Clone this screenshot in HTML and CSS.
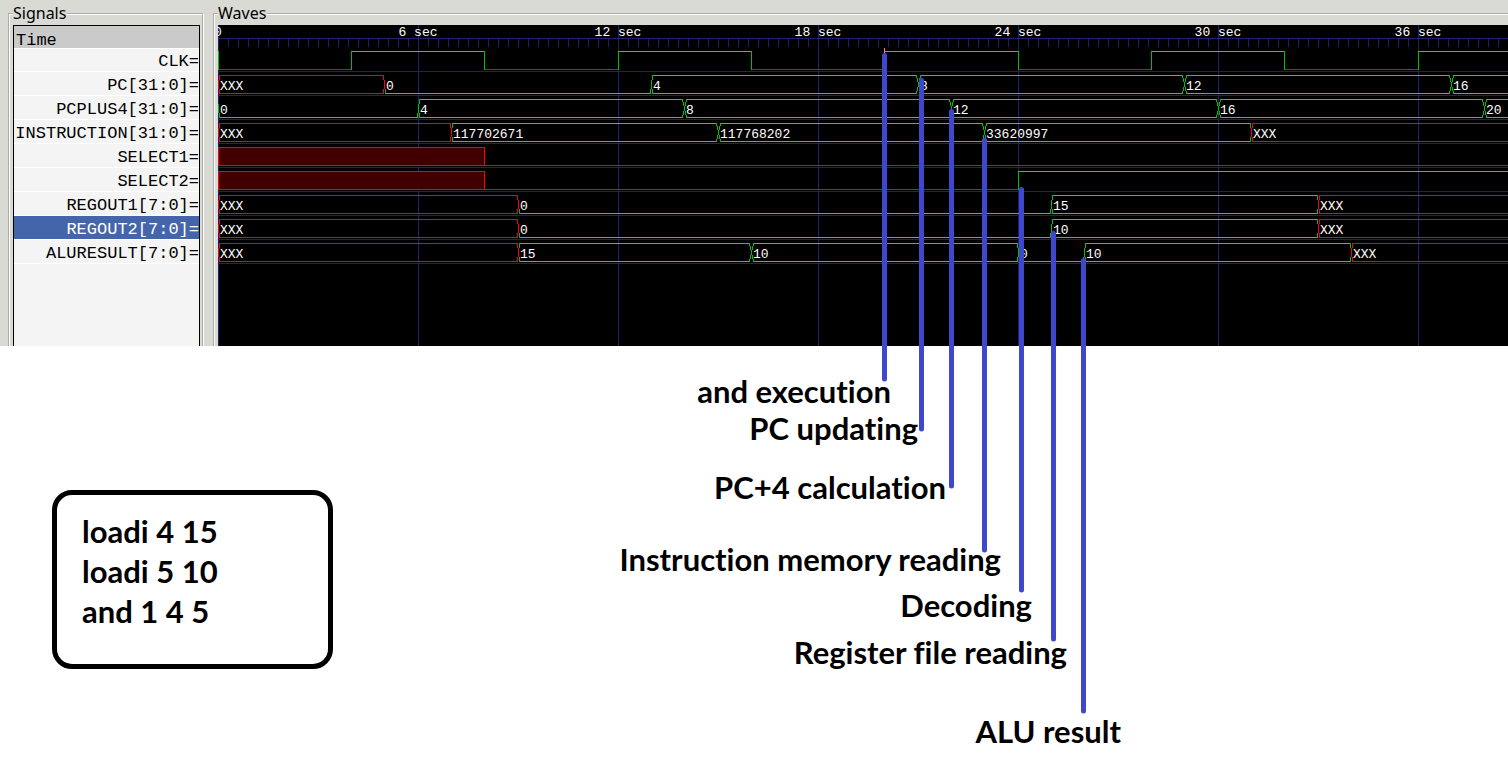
FILE: index.html
```html
<!DOCTYPE html>
<html lang="en">
<head>
<meta charset="utf-8">
<title>Waveform viewer</title>
<link rel="stylesheet" href="styles.css">
</head>
<body>
<main class="page">
  <div class="viewer">
    <fieldset class="group signals">
      <legend>Signals</legend>
      <div class="signal-box">
        <div class="time">Time</div>
        <ul class="signal-list">
          <li><span>CLK</span><span>=</span></li>
          <li><span>PC[31:0]</span><span>=</span></li>
          <li><span>PCPLUS4[31:0]</span><span>=</span></li>
          <li><span>INSTRUCTION[31:0]</span><span>=</span></li>
          <li><span>SELECT1</span><span>=</span></li>
          <li><span>SELECT2</span><span>=</span></li>
          <li><span>REGOUT1[7:0]</span><span>=</span></li>
          <li class="selected"><span>REGOUT2[7:0]</span><span>=</span></li>
          <li><span>ALURESULT[7:0]</span><span>=</span></li>
        </ul>
      </div>
    </fieldset>
    <fieldset class="group waves">
      <legend>Waves</legend>
      <svg class="chart" id="chart" role="img" aria-label="Signal waveforms"></svg>
    </fieldset>
  </div>

  <div class="program">
    <div>loadi 4 15</div>
    <div>loadi 5 10</div>
    <div>and 1 4 5</div>
  </div>

  <svg class="notes">
    <path class="pointer" d="M884.5 55.500V379M921.500 80.500V429M951.500 111.500V486M984.500 140.500V550M1021.500 189.500V590M1053.500 233.500V639M1083.500 260.500V711"/>
    <text x="891" y="403">and execution</text>
    <text x="918" y="440">PC updating</text>
    <text x="946" y="499">PC+4 calculation</text>
    <text x="1001" y="571">Instruction memory reading</text>
    <text x="1032" y="617">Decoding</text>
    <text x="1067" y="664">Register file reading</text>
    <text x="1121" y="743">ALU result</text>
  </svg>
</main>
<script src="waves.js"></script>
</body>
</html>
```

FILE: styles.css
```css
* { box-sizing: border-box; }

body {
  margin: 0;
  background: #fff;
  color: #000;
  font-family: "Noto Sans", sans-serif;
}

.page { position: relative; overflow: hidden; min-height: 100vh; }

.viewer {
  display: flex;
  gap: 10px;
  padding: 3px 0 0 8px;
  background: #dadad5;
}

.group {
  min-width: 0;
  margin: 0;
  padding: 0 2px 0 3px;
  border: 2px groove #fff;
  border-bottom: 0;
}

.group legend {
  height: 22px;
  padding: 0 1px 0 0;
  font-size: 16px;
  line-height: 20px;
}

.signals { flex: none; width: 196px; }

.waves { flex: 1; margin-left: -1px; padding-right: 0; border-right: 0; }

.signal-box {
  height: 321px;
  border: 1px solid #000;
  border-bottom: 0;
  background: #f4f4f4;
  font-family: "Liberation Mono", monospace;
  font-size: 17px;
}

.time {
  height: 22px;
  padding-left: 2px;
  background: #cacaca;
  line-height: 30px;
}

.signal-list { margin: 0; padding: 0; list-style: none; }

.signal-list li {
  display: flex;
  justify-content: flex-end;
  height: 24px;
  border-bottom: 1px solid #fff;
  line-height: 28px;
  white-space: nowrap;
}

.signal-list li:first-child { border-top: 1px solid #fff; line-height: 26px; }

.signal-list .selected { background: #4565ab; color: #fff; }

.chart {
  display: block;
  width: 100%;
  height: 321px;
  background: #000;
  overflow: hidden;
}

.chart path { fill: none; stroke-width: 1px; shape-rendering: crispEdges; }
.chart .grid { stroke: #202070; }
.chart .value { stroke: #00f000; }
.chart .edge { stroke: #00c000; }
.chart .low { stroke: #008000; }
.chart .unknown { stroke: #f00; }
.chart .marker { stroke: #ff8080; }
.chart .block { fill: #400000; stroke: #f00; }

.chart text {
  fill: #fff;
  font-family: "Liberation Mono", monospace;
  font-size: 13px;
}

.chart .tick { text-anchor: middle; }

.program {
  width: 281px;
  margin: 144px 0 0 52px;
  padding: 16px 25px 33px;
  border: 5px solid #000;
  border-radius: 20px;
  font-family: Lato, sans-serif;
  font-size: 31px;
  font-weight: 700;
  line-height: 40px;
}

.notes {
  position: absolute;
  top: 0;
  left: 0;
  width: 100%;
  height: 100%;
  pointer-events: none;
}

.notes text {
  font-family: Lato, sans-serif;
  font-size: 31px;
  font-weight: 700;
  font-variant-ligatures: none;
  text-anchor: end;
}

.pointer { fill: none; stroke: #3f48cc; stroke-width: 5px; stroke-linecap: round; }
```

FILE: waves.js
```js
const chart = document.getElementById("chart");
const END = chart.clientWidth || chart.getBoundingClientRect().width;
const ROW = 24;
const at = (seconds) => Math.floor((seconds * 100) / 3 + 0.01);

function add(name, attrs, text) {
  const node = document.createElementNS("http://www.w3.org/2000/svg", name);
  for (const key in attrs) node.setAttribute(key, attrs[key]);
  if (text !== undefined) node.textContent = text;
  chart.append(node);
}

function across(cls, x1, x2, y) {
  add("path", { class: cls, d: `M${x1} ${y + 0.5}H${x2}` });
}

function down(cls, x, y1, y2) {
  add("path", { class: cls, d: `M${x + 0.5} ${y1}V${y2}` });
}

// Ruler and grid
across("grid", 0, END, 13);
for (let x = 10; x < END; x += 10) down("grid", x, 14, 22);
for (let x = 0; x < END; x += 200) down("grid", x, 0, 321);
for (let row = 0; row < 9; row++) across("grid", 0, END, 46 + row * ROW);
for (let s = 0; at(s) + 24 < END; s += 6) {
  add("text", { class: "tick", x: at(s), y: 11 }, s ? `${s} sec` : "0");
}

// Single-bit signals: [time, level] pairs
function bit(row, changes) {
  const top = 26 + row * ROW;
  const low = top + 18;
  changes.forEach(([time, level], i) => {
    const x = at(time);
    const end = i + 1 < changes.length ? at(changes[i + 1][0]) : END;
    if (x >= END) return;
    if (level === "x") {
      add("path", { class: "block", d: `M${x + 0.5} ${top + 0.5}H${end + 0.5}V${low + 0.5}H${x + 0.5}Z` });
      return;
    }
    across(level ? "value" : "low", x + 1, end + 1, level ? top : low);
    if (i === 0 || changes[i - 1][1] !== "x") down("edge", x, top, low + 1);
  });
}

// Buses: [time, value] pairs
function bus(row, changes) {
  const top = 26 + row * ROW;
  const low = top + 18;
  const kind = (v) => (v === "XXX" ? "x" : v === "0" ? "zero" : "value");
  changes.forEach(([time, value], i) => {
    const x = at(time);
    if (x >= END) return;
    const next = changes[i + 1];
    const prev = i ? kind(changes[i - 1][1]) : null;
    const now = kind(value);
    const crossing = prev === "value" && now === "value";
    const line = now === "x" ? "unknown" : "value";
    const edge = now === "x" ? "unknown" : "edge";
    const start = x + (crossing ? 2 : 1);
    const end = next ? at(next[0]) - (now === "value" && kind(next[1]) === "value" ? 1 : 0) : END;

    across(line, start, end, low);
    if (now !== "zero") across(line, start, end, top);

    if (crossing) {
      [[-2, 0, 3], [-1, 3, 7], [0, 7, 12], [1, 12, 16], [2, 16, 19]].forEach(([dx, a, b]) => {
        down("edge", x + dx, top + a, top + b);
        if (dx) down("edge", x - dx, top + a, top + b);
      });
    } else {
      const before = prev === "x" ? "unknown" : "edge";
      if (prev) {
        if (prev !== "zero") down(before, x - 1, top, top + 5);
        down(before, x - 1, top + 14, top + 19);
      }
      down(prev === "x" ? "unknown" : edge, x, top + 5, top + 14);
      if (now !== "zero") down(edge, x + 1, top, top + 5);
      down(edge, x + 1, top + 14, top + 19);
    }
    add("text", { x: x + 2, y: top + 15 }, value);
  });
}

bit(0, [[0, 0], [4, 1], [8, 0], [12, 1], [16, 0], [20, 1], [24, 0], [28, 1], [32, 0], [36, 1], [40, 0]]);
bus(1, [[0, "XXX"], [5, "0"], [13, "4"], [21, "8"], [29, "12"], [37, "16"]]);
bus(2, [[0, "0"], [6, "4"], [14, "8"], [22, "12"], [30, "16"], [38, "20"]]);
bus(3, [[0, "XXX"], [7, "117702671"], [15, "117768202"], [23, "33620997"], [31, "XXX"]]);
bit(4, [[0, "x"], [8, 0]]);
bit(5, [[0, "x"], [8, 0], [24, 1]]);
bus(6, [[0, "XXX"], [9, "0"], [25, "15"], [33, "XXX"]]);
bus(7, [[0, "XXX"], [9, "0"], [25, "10"], [33, "XXX"]]);
bus(8, [[0, "XXX"], [9, "15"], [16, "10"], [24, "0"], [26, "10"], [34, "XXX"]]);

down("marker", at(20), 23, 28);
```
